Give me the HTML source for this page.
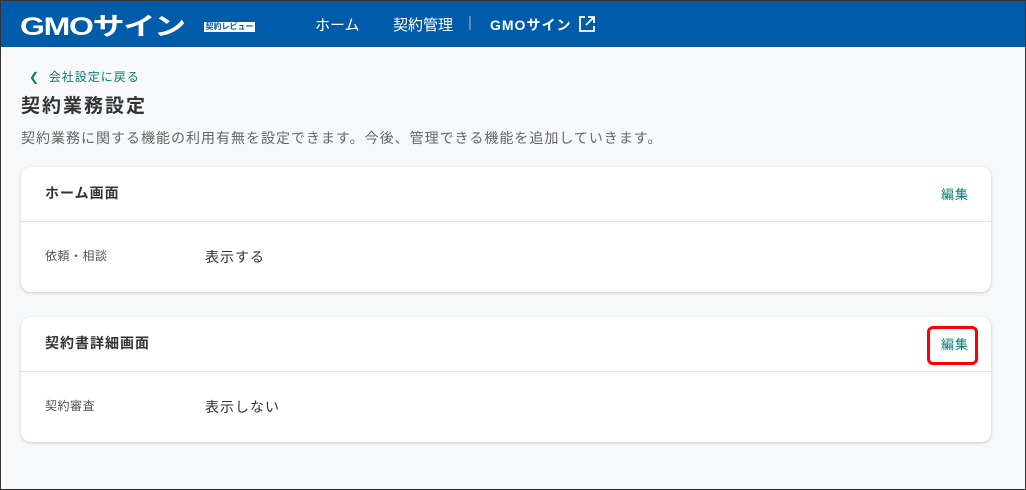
<!DOCTYPE html>
<html><head><meta charset="utf-8"><style>
*{margin:0;padding:0;box-sizing:border-box}
body{width:1026px;height:490px;overflow:hidden;background:#f7f8fa;font-family:"Liberation Sans","Noto Sans CJK JP",sans-serif;color:#333;position:relative}
.frame{position:absolute;left:0;top:0;width:1026px;height:490px;border:1px solid #333;pointer-events:none;z-index:10}
.hd{position:absolute;left:0;top:0;width:1026px;height:47px;background:#005bab;color:#fff}
.logo{position:absolute;left:20px;top:7px;font-size:25px;font-weight:bold;transform:scaleX(1.28);transform-origin:left;letter-spacing:-1px}
.badge{position:absolute;left:204px;top:22px;width:51px;height:10px;background:#fff;color:#005bab;font-size:8px;line-height:10px;text-align:center;font-weight:bold}
.nav{position:absolute;top:14px;font-size:15px}
.a{position:absolute;font-size:12px;color:#0b7b70;letter-spacing:1px}
.card{position:absolute;left:21px;width:970px;height:125px;background:#fff;border-radius:10px;box-shadow:0 1px 3px rgba(0,0,0,.2)}
.card .t{position:absolute;left:24px;top:16px;font-size:14px;font-weight:bold;letter-spacing:1px}
.card .e{position:absolute;left:920px;top:17px;font-size:13px;color:#0b7b70;letter-spacing:1px}
.card .d{position:absolute;left:0;top:54px;width:100%;height:1px;background:#e3e3e3}
.card .l{position:absolute;left:24px;top:80px;font-size:12px;color:#555;letter-spacing:.5px}
.card .v{position:absolute;left:184px;top:80px;font-size:14px;letter-spacing:1px}
.red{position:absolute;left:927px;top:326px;width:51px;height:39px;border:3px solid #f00;border-radius:6px}
</style></head><body>
<div class="hd">
<div class="logo">GMOサイン</div>
<div class="badge">契約レビュー</div>
<div class="nav" style="left:315px">ホーム</div>
<div class="nav" style="left:393px">契約管理</div>
<div class="nav" style="left:468px;color:#9ab">|</div>
<div class="nav" style="left:490px;font-weight:bold;font-size:14px;top:15px;letter-spacing:1px">GMOサイン</div>
<svg style="position:absolute;left:578px;top:15px" width="18" height="18" viewBox="0 0 18 18" fill="none" stroke="#fff" stroke-width="1.8"><path d="M7 2H2v14h14v-5M10 2h6v6M16 2L8 10"/></svg>
</div>
<div class="a" style="left:29px;top:68px">❮&nbsp; 会社設定に戻る</div>
<div style="position:absolute;left:21px;top:91px;font-size:19px;font-weight:bold;letter-spacing:2px">契約業務設定</div>
<div style="position:absolute;left:21px;top:128px;font-size:14px;color:#666;letter-spacing:1px">契約業務に関する機能の利用有無を設定できます。今後、管理できる機能を追加していきます。</div>
<div class="card" style="top:167px"><div class="t">ホーム画面</div><div class="e">編集</div><div class="d"></div><div class="l">依頼・相談</div><div class="v">表示する</div></div>
<div class="card" style="top:317px"><div class="t">契約書詳細画面</div><div class="e">編集</div><div class="d"></div><div class="l">契約審査</div><div class="v">表示しない</div></div>
<div class="red"></div>
<div class="frame"></div>
</body></html>
